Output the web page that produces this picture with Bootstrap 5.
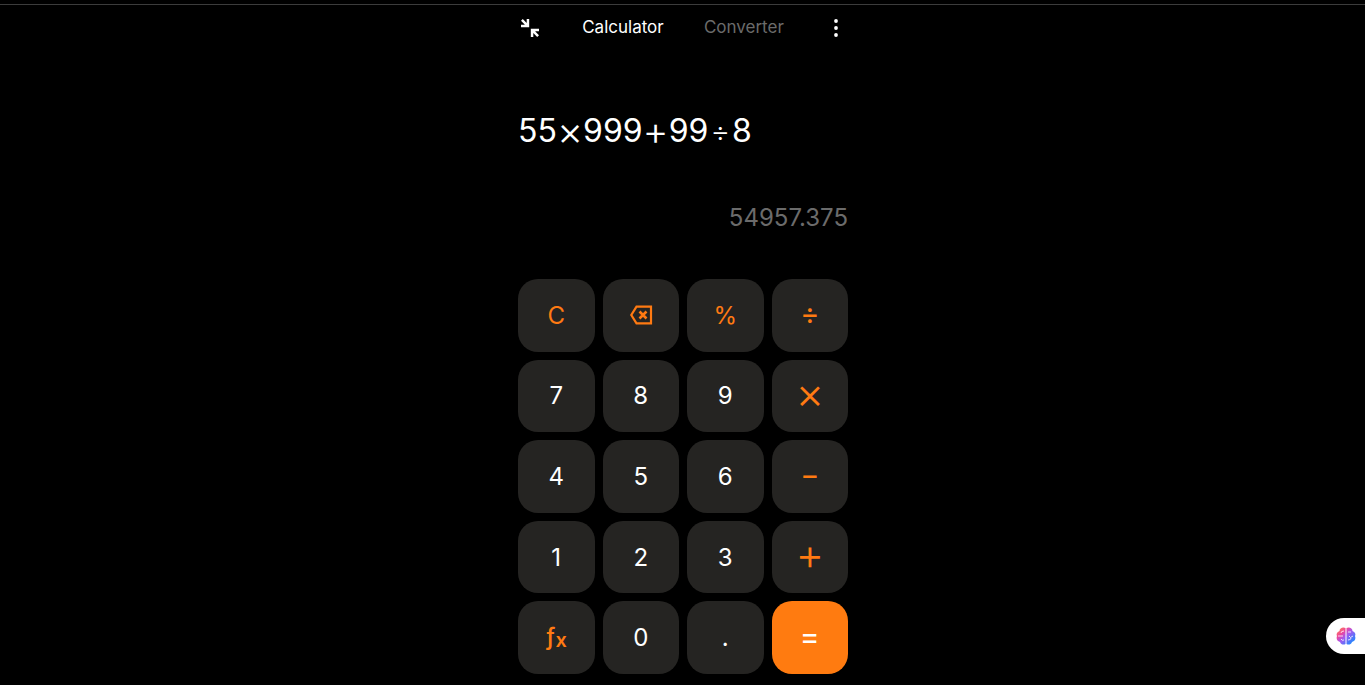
<!DOCTYPE html>
<html lang="en">
<head>
<meta charset="utf-8">
<meta name="viewport" content="width=device-width, initial-scale=1">
<title>Calculator</title>
<link rel="stylesheet" href="https://cdn.jsdelivr.net/npm/bootstrap@5.3.0/dist/css/bootstrap.min.css">
<style>
  body { background: #000; color: #fff; font-family: Inter, "Liberation Sans", sans-serif; border-top: 1px solid #3c3c3c; margin-top: 4px; }
  html { background: #000; }
  .calc { max-width: 331px; padding-left: 1px; }
  .topbar { height: 46px; font-size: 17px; }
  .topbar a { color: #fff; text-decoration: none; }
  .topbar a.off { color: #6b6b6b; }
  .tool { background: none; border: 0; color: #fff; width: 24px; height: 24px; padding: 0; display: flex; align-items: center; justify-content: center; }
  .expr { margin-top: 56px; height: 48px; font-size: 32px; line-height: 48px; }
  .expr span { font-size: 40px; font-weight: 300; line-height: 24px; vertical-align: -3px; }
  .expr .divide { font-size: 30px; margin: 0 2px; vertical-align: 0; }
  .result { margin-top: 45px; font-size: 24px; line-height: 36px; color: #6b6b6b; }
  .pad { display: grid; grid-template-columns: repeat(4, 1fr); grid-template-rows: repeat(5, 1fr); gap: 8px; height: calc(100vh - 290px); min-height: 360px; margin-top: 43px; }
  .key { background: #252422; border: 0; border-radius: 20px; color: #fff; font-size: 24px; line-height: 36px; padding: 1px 0 0; display: flex; align-items: center; justify-content: center; }
  .op { color: #ff7a12; }
  .key.icon { padding: 0; }
  .key.big { font-size: 44px; font-weight: 300; padding: 0 0 6px; }
  .key.mid { font-size: 29px; padding: 0 0 2px; }
  .key.equals { background: #ff7b10; font-size: 30px; padding: 0 0 3px; }
  .fx { font-weight: 500; line-height: 24px; padding-bottom: 2px; }
  .fx sub { font-size: 20px; font-weight: 600; bottom: -2px; }
  .assist { right: 0; top: 618px; width: 39px; height: 36px; background: #fff; border: 0; border-radius: 18px 0 0 18px; padding: 0 0 0 10px; display: flex; align-items: center; }
</style>
</head>
<body>
<main class="calc mx-auto">
  <nav class="topbar d-flex align-items-center justify-content-between">
    <button class="tool" type="button" aria-label="Shrink window">
      <svg width="18" height="18" viewBox="0 0 18 18" fill="currentColor"><path d="M0 1.8L1.8 0L5.7 3.9V0H8.2V8.2H0V5.7H3.9ZM18 16.2L16.2 18L12.3 14.1V18H9.8V9.8H18V12.3H14.1Z"/></svg>
    </button>
    <a href="#calculator">Calculator</a>
    <a class="off" href="#converter">Converter</a>
    <button class="tool" type="button" aria-label="More options">
      <svg width="4" height="20" viewBox="0 0 4 20" fill="currentColor"><circle cx="2" cy="3" r="1.9"/><circle cx="2" cy="10" r="1.9"/><circle cx="2" cy="17" r="1.9"/></svg>
    </button>
  </nav>
  <div class="expr">55<span>×</span>999<span>+</span>99<span class="divide">÷</span>8</div>
  <div class="result text-end">54957.375</div>
  <div class="pad">
    <button class="key op" type="button">C</button>
    <button class="key op icon" type="button" aria-label="Backspace">
      <svg width="24" height="20" viewBox="0 0 24 20" fill="none" stroke="currentColor" stroke-width="2.2"><path d="M7.500 1.700H22V18.300H7.500L2.300 10Z"/><path d="M10.500 6.500l7 7M17.500 6.500l-7 7" stroke-width="2.600"/></svg>
    </button>
    <button class="key op" type="button">%</button>
    <button class="key op mid" type="button">÷</button>
    <button class="key" type="button">7</button>
    <button class="key" type="button">8</button>
    <button class="key" type="button">9</button>
    <button class="key op big" type="button">×</button>
    <button class="key" type="button">4</button>
    <button class="key" type="button">5</button>
    <button class="key" type="button">6</button>
    <button class="key op mid" type="button">−</button>
    <button class="key" type="button">1</button>
    <button class="key" type="button">2</button>
    <button class="key" type="button">3</button>
    <button class="key op big" type="button">+</button>
    <button class="key op icon" type="button"><span class="fx">ƒ<sub>x</sub></span></button>
    <button class="key" type="button">0</button>
    <button class="key" type="button">.</button>
    <button class="key equals" type="button">=</button>
  </div>
</main>
<button class="assist position-fixed" type="button" aria-label="Assistant">
  <svg width="20" height="18" viewBox="0 0 20 18">
    <defs><linearGradient id="brain" x1="0" y1="0" x2="1" y2="1"><stop offset="0" stop-color="#ff9a3c"/><stop offset=".3" stop-color="#f0459a"/><stop offset=".5" stop-color="#a25af0"/><stop offset=".9" stop-color="#168cff"/></linearGradient></defs>
    <path fill="url(#brain)" d="M9.500 1C7 -.5 3.500 1 3.500 4C1 5 0 7 1 9C0 12 1 14 4 15C5 18 8 18 9.500 17ZM10.500 1C13 -.5 16.500 1 16.500 4C19 5 20 7 19 9C20 12 19 14 16 15C15 18 12 18 10.500 17Z"/>
    <path fill="none" stroke="#fff" stroke-width=".8" d="M2 9H7M5 6Q5 4 8 4M5 12Q6 14 8 13M12 5H15M13 9Q14 12 17 9M12 13Q15 13 15 11"/>
  </svg>
</button>
<script src="https://cdn.jsdelivr.net/npm/bootstrap@5.3.0/dist/js/bootstrap.bundle.min.js"></script>
</body>
</html>
